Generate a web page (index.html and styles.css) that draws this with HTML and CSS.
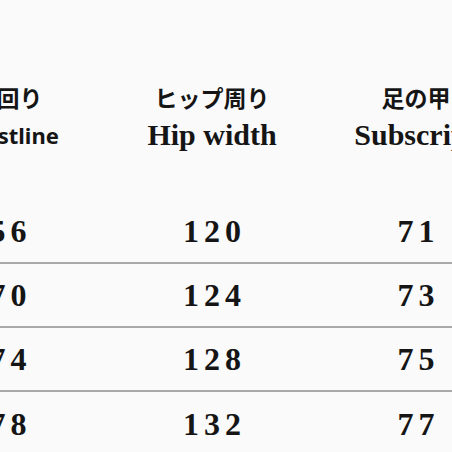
FILE: index.html
```html
<!DOCTYPE html>
<html lang="ja">
<head>
<meta charset="utf-8">
<link rel="stylesheet" href="styles.css">
</head>
<body>
<div class="table">
  <div class="head">
    <div class="cell"><div class="jp">腰回り</div><div class="en sans">Waistline</div></div>
    <div class="cell"><div class="jp">ヒップ周り</div><div class="en">Hip width</div></div>
    <div class="cell"><div class="jp">足の甲</div><div class="en">Subscript</div></div>
  </div>
  <div class="row"><div class="num">56</div><div class="num">120</div><div class="num">71</div></div>
  <div class="row"><div class="num">70</div><div class="num">124</div><div class="num">73</div></div>
  <div class="row"><div class="num">74</div><div class="num">128</div><div class="num">75</div></div>
  <div class="row last"><div class="num">78</div><div class="num">132</div><div class="num">77</div></div>
</div>
</body>
</html>
```
FILE: styles.css
```css
html, body {
  margin: 0;
  padding: 0;
  background: #fafafa;
  overflow: hidden;
  width: 452px;
  height: 452px;
}
.table {
  margin-left: -94px;
  width: 612px;
  color: #151515;
}
.head {
  display: grid;
  grid-template-columns: 204px 204px 204px;
  padding-top: 84px;
  height: 200px;
  box-sizing: border-box;
}
.cell {
  display: flex;
  flex-direction: column;
  align-items: center;
  white-space: nowrap;
}
.jp {
  font-family: "Noto Sans CJK JP", sans-serif;
  font-weight: 700;
  font-size: 23px;
  line-height: 27px;
}
.en {
  font-family: "Liberation Serif", serif;
  font-weight: 700;
  font-size: 30px;
  line-height: 36px;
  margin-top: 6px;
}
.en.sans {
  font-family: "Noto Sans", sans-serif;
  font-size: 22px;
  line-height: 36px;
}
.row {
  display: grid;
  grid-template-columns: 204px 204px 204px;
  height: 64px;
  box-sizing: border-box;
  border-bottom: 2px solid #a9a9a9;
  align-items: center;
}
.row.last {
  border-bottom: none;
}
.num {
  text-align: center;
  font-family: "Liberation Serif", serif;
  font-weight: 700;
  font-size: 32px;
  letter-spacing: 5px;
  text-indent: 5px;
  line-height: 1;
}
```
